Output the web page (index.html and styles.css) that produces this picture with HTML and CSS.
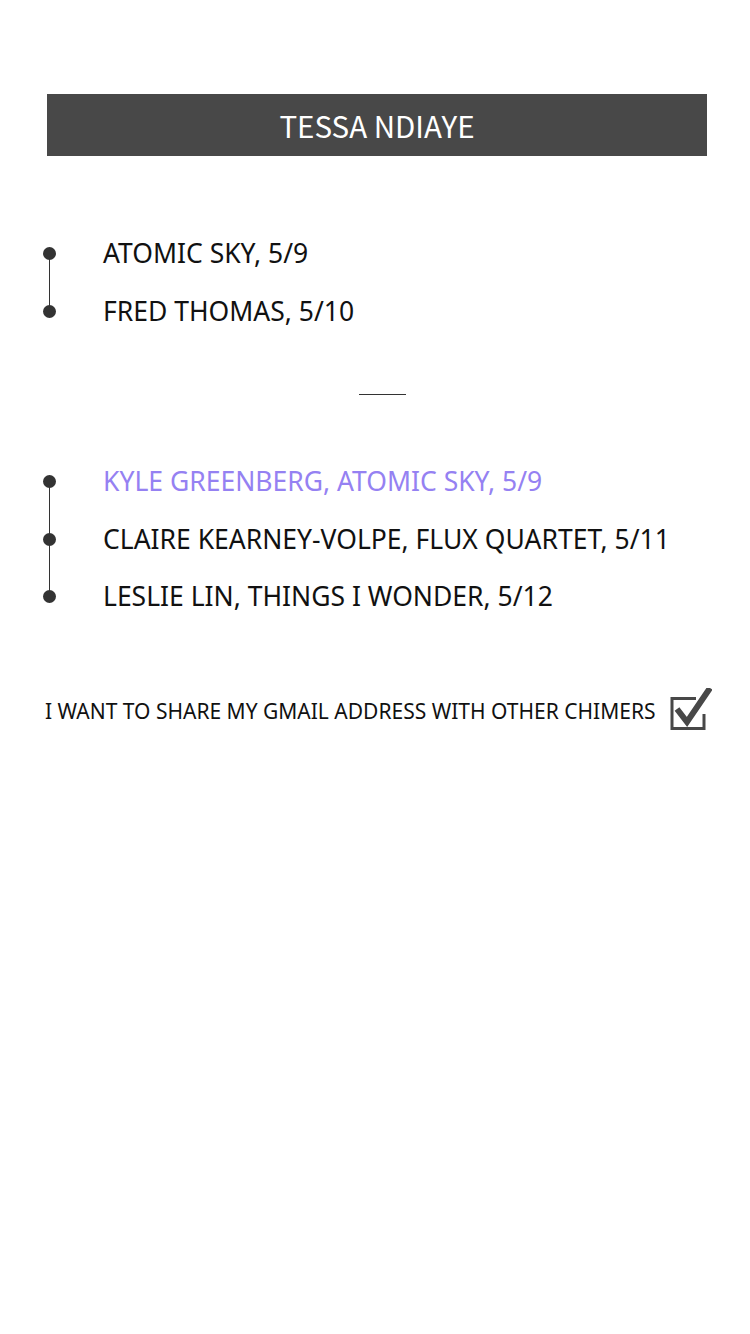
FILE: index.html
```html
<!DOCTYPE html>
<html>
<head>
<meta charset="utf-8">
<link rel="stylesheet" href="styles.css">
</head>
<body>
<div class="page">
  <div class="header">TESSA NDIAYE</div>

  <ul class="timeline first">
    <li class="item">ATOMIC SKY, 5/9</li>
    <li class="item">FRED THOMAS, 5/10</li>
  </ul>

  <div class="divider"></div>

  <ul class="timeline second">
    <li class="item active">KYLE GREENBERG, ATOMIC SKY, 5/9</li>
    <li class="item">CLAIRE KEARNEY-VOLPE, FLUX QUARTET, 5/11</li>
    <li class="item">LESLIE LIN, THINGS I WONDER, 5/12</li>
  </ul>

  <div class="share">
    <span class="share-text">I WANT TO SHARE MY GMAIL ADDRESS WITH OTHER CHIMERS</span>
    <svg class="check" width="44" height="42" viewBox="0 0 44 42">
      <path d="M5 10.5 H28 M4 9 V42 M2.5 40.5 H37.5 M36 26 V42" fill="none" stroke="#484848" stroke-width="3"/>
      <path d="M9 21 L19 34 L42 0" fill="none" stroke="#484848" stroke-width="6" stroke-linejoin="miter"/>
    </svg>
  </div>
</div>
</body>
</html>
```

FILE: styles.css
```css
html, body {
  margin: 0;
  padding: 0;
  background: #ffffff;
}

body {
  font-family: "Noto Sans", "Open Sans", sans-serif;
  color: #111111;
}

.page {
  width: 750px;
  padding-top: 94px;
}

.header {
  margin: 0 43px 0 47px;
  height: 62px;
  background: #484848;
  color: #ffffff;
  font-family: "Noto Sans CJK KR", "Noto Sans", sans-serif;
  font-size: 29.5px;
  line-height: 62px;
  text-align: center;
}

.timeline {
  list-style: none;
  margin: 0;
  padding: 0 0 0 103px;
  position: relative;
}

.timeline.first {
  margin-top: 69px;
}

.timeline.second {
  margin-top: 58px;
}

.item {
  position: relative;
  height: 57.5px;
  line-height: 57px;
  font-size: 26.5px;
}

.item::before {
  content: "";
  position: absolute;
  left: -60px;
  top: 22px;
  width: 13px;
  height: 13px;
  border-radius: 50%;
  background: #333333;
}

.item::after {
  content: "";
  position: absolute;
  left: -54px;
  top: 29px;
  width: 1px;
  height: 57.5px;
  background: #333333;
}

.item:last-child::after {
  display: none;
}

.item.active {
  color: #9581f2;
}

.divider {
  width: 47px;
  height: 1px;
  background: #333333;
  margin: 54px auto 0 359px;
}

.share {
  display: flex;
  align-items: flex-end;
  margin-top: 62px;
  padding-left: 45px;
}

.share-text {
  font-size: 21px;
  line-height: 30px;
  margin-bottom: 4px;
}

.check {
  margin-left: 12px;
  display: block;
}
```
